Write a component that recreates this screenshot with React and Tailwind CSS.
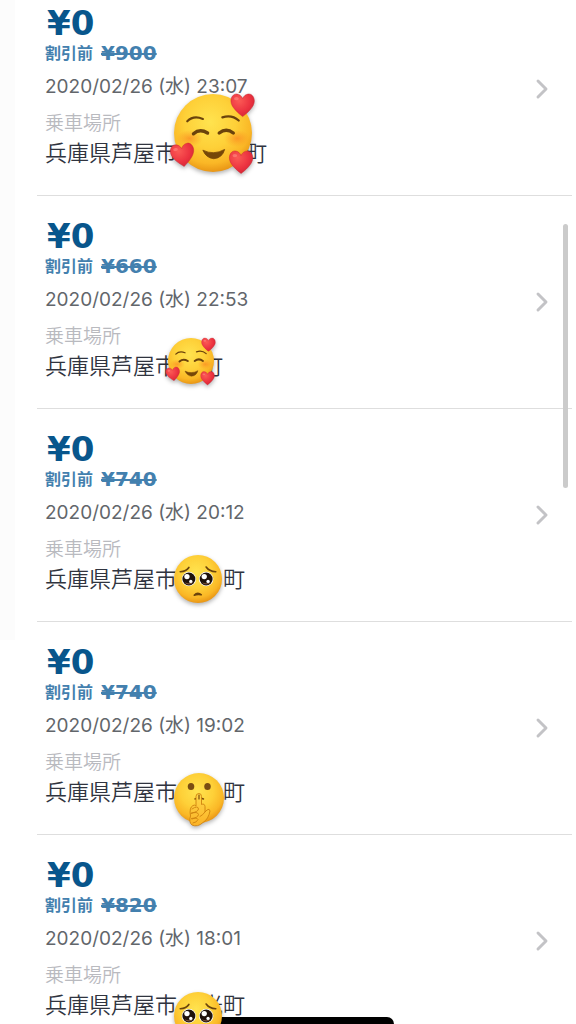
import React from "react"
import { ChevronRight } from "lucide-react"

const rides = [
	{ id: 1, before: "¥900", date: "2020/02/26 (水) 23:07", gap: "w-[68px]", tail: "町", face: "love", spot: "left-[137px] top-[111px] size-[78px]" },
	{ id: 2, before: "¥660", date: "2020/02/26 (水) 22:53", gap: "w-[24px]", tail: "町", face: "love", spot: "left-[131px] top-[142px] size-[46px]" },
	{ id: 3, before: "¥740", date: "2020/02/26 (水) 20:12", gap: "w-[46px]", tail: "町", face: "pleading", spot: "left-[137px] top-[146px] size-[48px]" },
	{ id: 4, before: "¥740", date: "2020/02/26 (水) 19:02", gap: "w-[46px]", tail: "町", face: "shush", spot: "left-[137px] top-[151px] size-[50px]" },
	{ id: 5, before: "¥820", date: "2020/02/26 (水) 18:01", gap: "w-[24px]", tail: "光町", face: "pleading", spot: "left-[137px] top-[157px] size-[48px]" },
]

const Heart = ({ x, y, angle }) => (
	<g transform={`translate(${x} ${y}) rotate(${angle})`}>
		<path d="M0 15C-5 11-15 3-15-5c0-5 3-9 7-9 4 0 7 3 8 6 1-3 4-6 8-6 4 0 7 4 7 9C15 3 5 11 0 15Z" fill="url(#heart)" stroke="#c9242f" strokeWidth="0.6" />
		<ellipse cx="-8" cy="-8" rx="3" ry="2" fill="#ff8b84" opacity="0.6" />
	</g>
)

const LoveFace = () => (
	<>
		<ellipse cx="20" cy="57" rx="17" ry="11" fill="url(#blush)" />
		<ellipse cx="81" cy="57" rx="17" ry="11" fill="url(#blush)" />
		<g fill="none" stroke="#6b430c" strokeLinecap="round">
			<path d="M17 35Q25 27 37 32" strokeWidth="2.8" />
			<path d="M62 30Q74 26 83 34" strokeWidth="2.8" />
			<path d="M25 51Q33 44 43 50" strokeWidth="4.4" />
			<path d="M58 50Q67 43 76 50" strokeWidth="4.4" />
		</g>
		<path d="M37 72Q51 79 65 71Q62 82 51 83Q41 82 37 72Z" fill="#764708" stroke="#764708" strokeWidth="1" strokeLinejoin="round" />
		<Heart x={88} y={14} angle={0} />
		<Heart x={11} y={78} angle={-8} />
		<Heart x={86} y={87} angle={0} />
	</>
)

const PleadingEye = ({ x }) => (
	<>
		<circle cx={x} cy="50" r="15" fill="#fff" />
		<circle cx={x} cy="50" r="13.5" fill="#1f120b" />
		<path d={`M${x - 9} 57a11 11 0 0 0 18 0q-9 4-18 0Z`} fill="#7a523b" />
		<circle cx={x - 4} cy="45" r="5.5" fill="#fff" />
		<circle cx={x + 4} cy="55" r="3.5" fill="#fff" />
	</>
)

const PleadingFace = () => (
	<>
		<path d="M13 35Q26 34 31 26" fill="none" stroke="#6b430c" strokeWidth="3.4" strokeLinecap="round" />
		<path d="M67 25Q73 34 87 35" fill="none" stroke="#6b430c" strokeWidth="3.4" strokeLinecap="round" />
		<PleadingEye x={31} />
		<PleadingEye x={67} />
		<path d="M42 84Q49 76 57 83Q49 81 42 84Z" fill="#6b430c" stroke="#6b430c" strokeWidth="3" strokeLinejoin="round" />
	</>
)

const ShushFace = () => (
	<>
		<ellipse cx="34" cy="27" rx="6.5" ry="7" fill="#7a4d12" />
		<ellipse cx="67" cy="27" rx="6.5" ry="7" fill="#7a4d12" />
		<path d="M42 52Q50 48 59 52" fill="none" stroke="#7a4a0b" strokeWidth="3" strokeLinecap="round" />
		<path d="M44 66V47Q44 41 50 41Q55 41 55 47V63Q61 60 62 67V78L66 74Q71 70 72 76Q69 92 58 99Q47 109 36 104Q29 98 33 86Q30 69 38 65Q41 63 44 66Z" fill="url(#hand)" stroke="#cf820f" strokeWidth="1.8" strokeLinejoin="round" />
		<path d="M36 72Q48 64 49 72Q48 78 35 80M34 81Q47 76 49 83Q48 90 35 91M36 92Q46 88 48 93Q46 99 38 100M62 78Q58 84 52 87" fill="none" stroke="#cf820f" strokeWidth="1.8" strokeLinecap="round" />
		<path d="M50 44V52" stroke="#7a4a0b" strokeWidth="2.4" strokeLinecap="round" />
	</>
)

const faces = { love: LoveFace, pleading: PleadingFace, shush: ShushFace }

const Sticker = ({ face, className }) => {
	const Face = faces[face]
	return (
		<svg viewBox="0 0 100 100" aria-hidden="true" className={`absolute z-20 overflow-visible drop-shadow-[0_2px_2px_rgba(0,0,0,0.3)] ${className}`}>
			<circle cx="50" cy="50" r="50" fill="url(#skin)" />
			<Face />
		</svg>
	)
}

const StickerColors = () => (
	<svg aria-hidden="true" className="absolute size-0">
		<defs>
			<radialGradient id="skin" cx="0.46" cy="0.36" r="0.66">
				<stop offset="0" stopColor="#ffe34f" />
				<stop offset="0.5" stopColor="#fed038" />
				<stop offset="0.8" stopColor="#fab726" />
				<stop offset="1" stopColor="#e69012" />
			</radialGradient>
			<radialGradient id="blush">
				<stop offset="0" stopColor="#fb8a22" stopOpacity="0.75" />
				<stop offset="1" stopColor="#fb9a22" stopOpacity="0" />
			</radialGradient>
			<radialGradient id="heart" cx="0.35" cy="0.3" r="0.8">
				<stop offset="0" stopColor="#fb5a55" />
				<stop offset="0.6" stopColor="#ec3340" />
				<stop offset="1" stopColor="#cf2434" />
			</radialGradient>
			<linearGradient id="hand" x1="0" y1="0" x2="0" y2="1">
				<stop offset="0" stopColor="#ffd84a" />
				<stop offset="1" stopColor="#fbb226" />
			</linearGradient>
		</defs>
	</svg>
)

const RideRow = ({ ride }) => (
	<li className="relative border-b border-[#dedede]">
		<a href="#" className="flex items-center justify-between pt-[22px] pr-3.5 pb-7 pl-2">
			<div>
				<p className="pl-0.5 font-['DejaVu_Sans',sans-serif] text-[34px] leading-9 font-bold text-[#08568c]">¥0</p>
				<p className="flex items-center gap-2 text-[#4380ae]">
					<span className="text-[16px] leading-6 font-bold">割引前</span>
					<s className="font-['DejaVu_Sans',sans-serif] text-[20px] leading-6 font-bold">{ride.before}</s>
				</p>
				<p className="mt-2.5 text-[19px] leading-6 text-[#62666b]">{ride.date}</p>
				<p className="mt-[13px] text-[19px] leading-6 font-[350] text-[#b9babf]">乗車場所</p>
				<p className="mt-[3px] flex text-[22px] leading-7 font-[350] text-[#30343f]">
					兵庫県芦屋市
					<span className={ride.gap} />
					{ride.tail}
				</p>
			</div>
			<ChevronRight aria-hidden="true" className="mt-1.5 size-8 text-[#c3c3c6]" strokeWidth={2.2} />
		</a>
		<Sticker face={ride.face} className={ride.spot} />
	</li>
)

const App = () => {
	return (
		<div className="relative h-screen overflow-hidden bg-white font-['Inter','Noto_Sans_CJK_JP',sans-serif]" lang="ja">
			<StickerColors />
			<div className="flex">
				<div className="h-[640px] w-[15px] shrink-0 bg-[#fcfcfc]" />
				<ul className="-mt-[17px] ml-[22px] mr-1 flex-1">
					{rides.map((r) => (
						<RideRow key={r.id} ride={r} />
					))}
				</ul>
			</div>
			<div className="absolute top-[224px] right-2 h-[264px] w-[5px] rounded-full bg-[#cbcbcb]" />
			<div className="absolute inset-x-[182px] bottom-0 z-10 h-[7px] rounded-t-full bg-black" />
		</div>
	)
}

export default App
